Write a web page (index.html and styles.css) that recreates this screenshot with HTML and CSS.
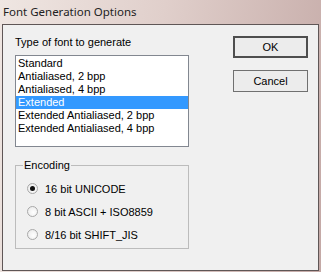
FILE: index.html
```html
<!DOCTYPE html>
<html lang="en">
<head>
    <meta charset="UTF-8">
    <title>Font Generation Options</title>
    <link rel="stylesheet" href="styles.css">
</head>
<body>
    <div class="window">
        <div class="titlebar">Font Generation Options</div>
        <div class="client">
            <div class="left">
                <div class="label">Type of font to generate</div>
                <div class="listbox">
                    <div class="item">Standard</div>
                    <div class="item">Antialiased, 2 bpp</div>
                    <div class="item">Antialiased, 4 bpp</div>
                    <div class="item selected">Extended</div>
                    <div class="item">Extended Antialiased, 2 bpp</div>
                    <div class="item">Extended Antialiased, 4 bpp</div>
                </div>
                <fieldset class="group">
                    <legend>Encoding</legend>
                    <label class="radio"><span class="dot checked"></span>16 bit UNICODE</label>
                    <label class="radio"><span class="dot"></span>8 bit ASCII + ISO8859</label>
                    <label class="radio"><span class="dot"></span>8/16 bit SHIFT_JIS</label>
                </fieldset>
            </div>
            <div class="right">
                <button class="btn default">OK</button>
                <button class="btn">Cancel</button>
            </div>
        </div>
    </div>
</body>
</html>
```

FILE: styles.css
```css
body {
    margin: 0;
    font-family: "Liberation Sans", Arial, sans-serif;
    font-size: 11px;
    color: #000;
}
.window {
    width: 321px;
    height: 272px;
    box-sizing: border-box;
    background: linear-gradient(100deg, #efe6e2 0%, #e0cfcb 45%, #c4a9a6 100%);
    padding: 0 2px 1px 2px;
    display: flex;
    flex-direction: column;
}
.titlebar {
    height: 24px;
    line-height: 24px;
    padding-left: 1px;
    font-family: "Noto Sans", sans-serif;
    font-size: 11.5px;
    color: #222;
}
.client {
    flex: 1;
    background: #f0f0f0;
    border: 1px solid #5f5656;
    display: flex;
    padding: 11px 0 0 12px;
}
.left {
    width: 174px;
}
.label {
    height: 13px;
    line-height: 13px;
    margin-bottom: 6px;
}
.listbox {
    height: 89px;
    background: #fff;
    border: 1px solid #828790;
    padding-top: 1px;
}
.item {
    height: 13px;
    line-height: 13px;
    padding-left: 2px;
}
.item.selected {
    background: #3399ff;
    color: #fff;
}
.group {
    margin: 12px 0 0 0;
    height: 90px;
    box-sizing: border-box;
    border: 1px solid #bcbcbc;
    padding: 6px 0 0 11px;
}
.group legend {
    padding: 0 1px;
    margin-left: -4px;
}
.radio {
    display: flex;
    align-items: center;
    height: 23px;
}
.dot {
    width: 11px;
    height: 11px;
    border-radius: 50%;
    border: 1px solid #a8a8a8;
    background: radial-gradient(circle at 60% 60%, #ffffff 0%, #e6e6e6 100%);
    box-sizing: border-box;
    margin-right: 7px;
    position: relative;
}
.dot.checked::after {
    content: "";
    position: absolute;
    left: 2px;
    top: 2px;
    width: 5px;
    height: 5px;
    border-radius: 50%;
    background: #111;
}
.right {
    margin-left: 44px;
    display: flex;
    flex-direction: column;
}
.btn {
    width: 75px;
    height: 22px;
    font-family: "Liberation Sans", Arial, sans-serif;
    font-size: 11px;
    background: #ececec;
    border: 1px solid #707070;
    border-radius: 0;
    margin-bottom: 12px;
    padding: 0;
}
.btn.default {
    border: 2px solid #4e4e4e;
}
```
